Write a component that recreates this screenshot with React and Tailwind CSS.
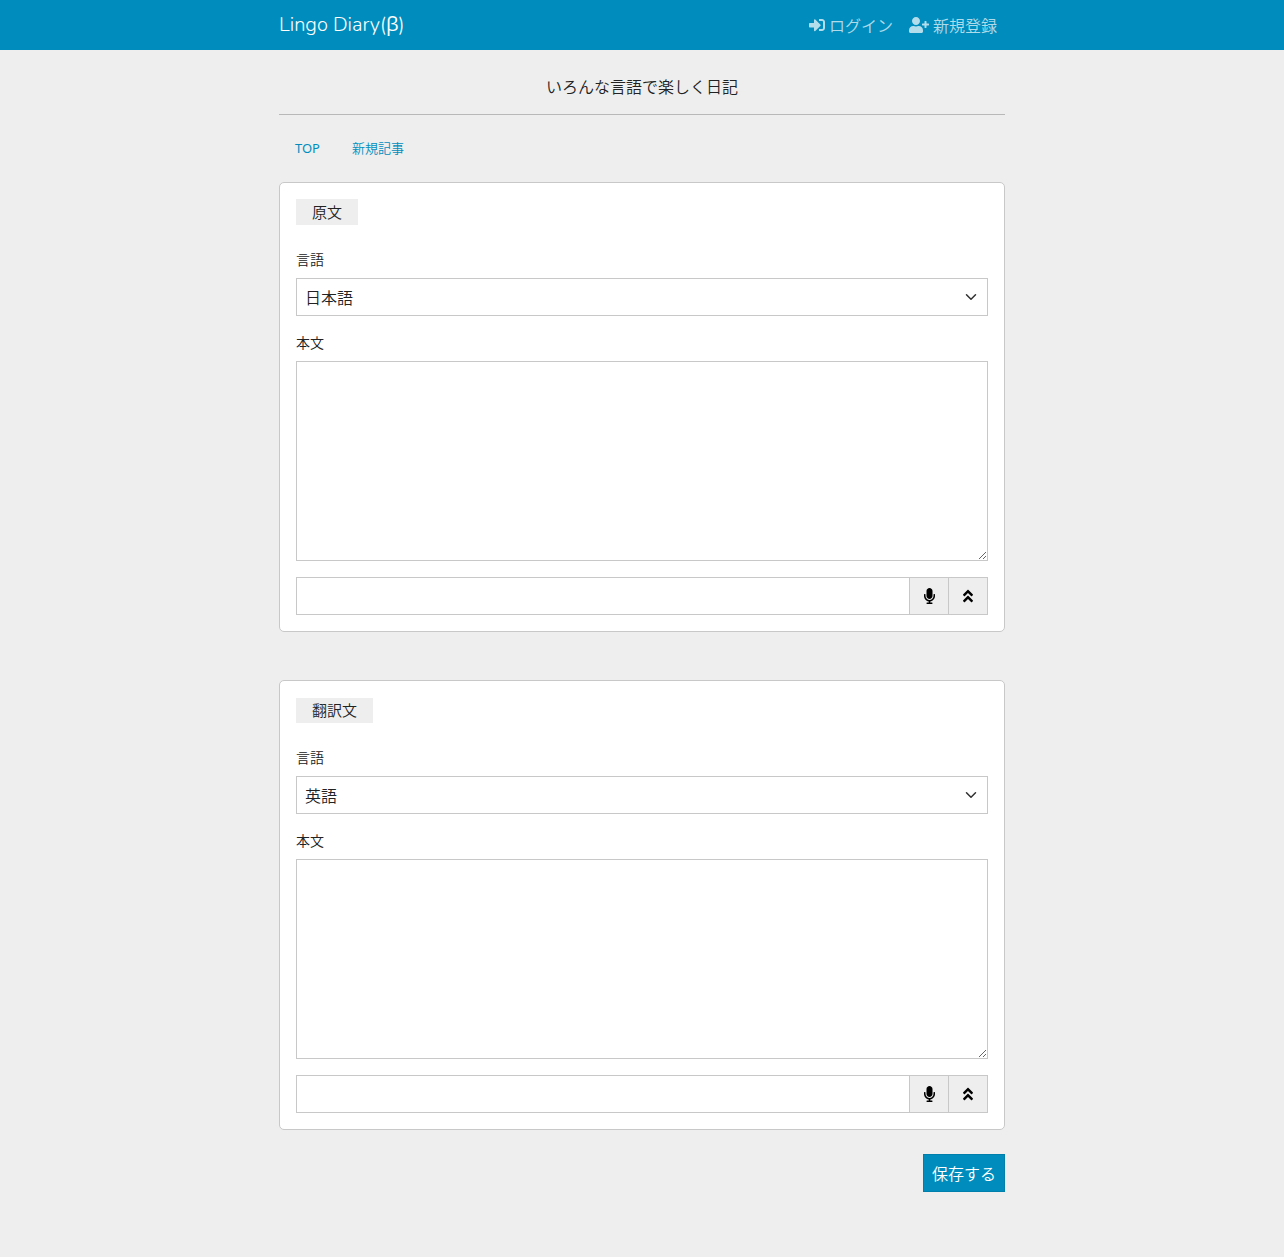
// Diary entry form page
import { FaSignInAlt, FaUserPlus, FaMicrophone, FaAngleDoubleUp } from 'react-icons/fa';

const sections = [
    { id: 'original', title: '原文', language: '日本語', titleClass: 'h-[26px]' },
    { id: 'translation', title: '翻訳文', language: '英語', titleClass: 'mt-px h-[25px]' },
];

const languages = ['日本語', '英語'];

const Navbar = () => (
    <nav className="h-[50px] bg-[#008dbd]">
        <div className="mx-auto flex h-full w-[726px] items-center justify-between">
            <a href="#" className="pb-0.5 font-['Nunito',sans-serif] text-[20px] font-light leading-[30px] text-white">
                Lingo Diary(<span className="font-['Open_Sans',sans-serif] font-normal">β</span>)
            </a>
            <ul className="flex text-base text-white/70">
                <li>
                    <a href="#" className="flex items-center gap-1 px-2">
                        <FaSignInAlt className="h-4 w-4" />
                        <span className="pt-px">ログイン</span>
                    </a>
                </li>
                <li>
                    <a href="#" className="flex items-center gap-1 px-2">
                        <FaUserPlus className="h-4 w-5" />
                        <span className="pt-px">新規登録</span>
                    </a>
                </li>
            </ul>
        </div>
    </nav>
);

const EntryCard = ({ id, title, language, titleClass }) => (
    <section className="h-[450px] rounded-[5px] border border-[#c8c8c8] bg-white p-4">
        <h2 className={`flex w-fit items-center bg-[#eee] px-4 text-[15px] font-[350] ${titleClass}`}>{title}</h2>

        <label htmlFor={`${id}-language`} className="mt-6 block text-sm leading-[21px]">言語</label>
        <div className="relative mt-2">
            <select
                id={`${id}-language`}
                defaultValue={language}
                className="block h-[38px] w-full appearance-none border border-[#c8c8c8] bg-white px-2 pt-px text-base"
            >
                {languages.map((name) => (
                    <option key={name}>{name}</option>
                ))}
            </select>
            <svg viewBox="0 0 16 16" className="pointer-events-none absolute right-[11px] top-[13px] h-3 w-3" fill="none">
                <path d="M2 5l6 6 6-6" stroke="#303030" strokeWidth="2" strokeLinecap="round" strokeLinejoin="round" />
            </svg>
        </div>

        <label htmlFor={`${id}-body`} className="mt-4 block text-sm leading-[21px]">本文</label>
        <textarea id={`${id}-body`} className="mt-2 block h-[200px] w-full border border-[#c8c8c8] bg-white p-2" />

        <div className="mt-4 flex h-[38px]">
            <input type="text" className="min-w-0 flex-1 border border-r-0 border-[#c8c8c8] bg-white px-2" />
            <button type="button" className="flex w-10 items-center justify-center border border-[#c8c8c8] bg-[#eee] pl-px text-black">
                <FaMicrophone className="h-4 w-[11px]" />
            </button>
            <button type="button" className="flex w-[39px] items-center justify-center border border-l-0 border-[#c8c8c8] bg-[#eee] text-black">
                <FaAngleDoubleUp className="h-4 w-4" />
            </button>
        </div>
    </section>
);

const App = () => {
    return (
        <div lang="ja" className="min-h-[1257px] bg-[#eee] font-['Open_Sans','Noto_Sans_CJK_JP',sans-serif] text-base font-[350] text-[#222]">
            <Navbar />

            <main className="mx-auto w-[726px]">
                <p className="h-[65px] border-b border-[#b8b8b8] pt-[25px] text-center leading-6">いろんな言語で楽しく日記</p>

                {/* Tabs */}
                <ul className="flex h-[67px] items-center gap-8 px-4 text-[13px] text-[#008dbd]">
                    <li><a href="#" className="font-['Noto_Sans',sans-serif] font-normal">TOP</a></li>
                    <li><a href="#">新規記事</a></li>
                </ul>

                {/* Original and translated text */}
                <div className="space-y-12">
                    {sections.map((section) => (
                        <EntryCard key={section.id} {...section} />
                    ))}
                </div>

                <div className="mt-6 flex justify-end">
                    <button type="button" className="h-[38px] w-[82px] border border-[#007fad] bg-[#008dbd] pt-px text-base text-white">
                        保存する
                    </button>
                </div>
            </main>
        </div>
    );
};

export default App;
